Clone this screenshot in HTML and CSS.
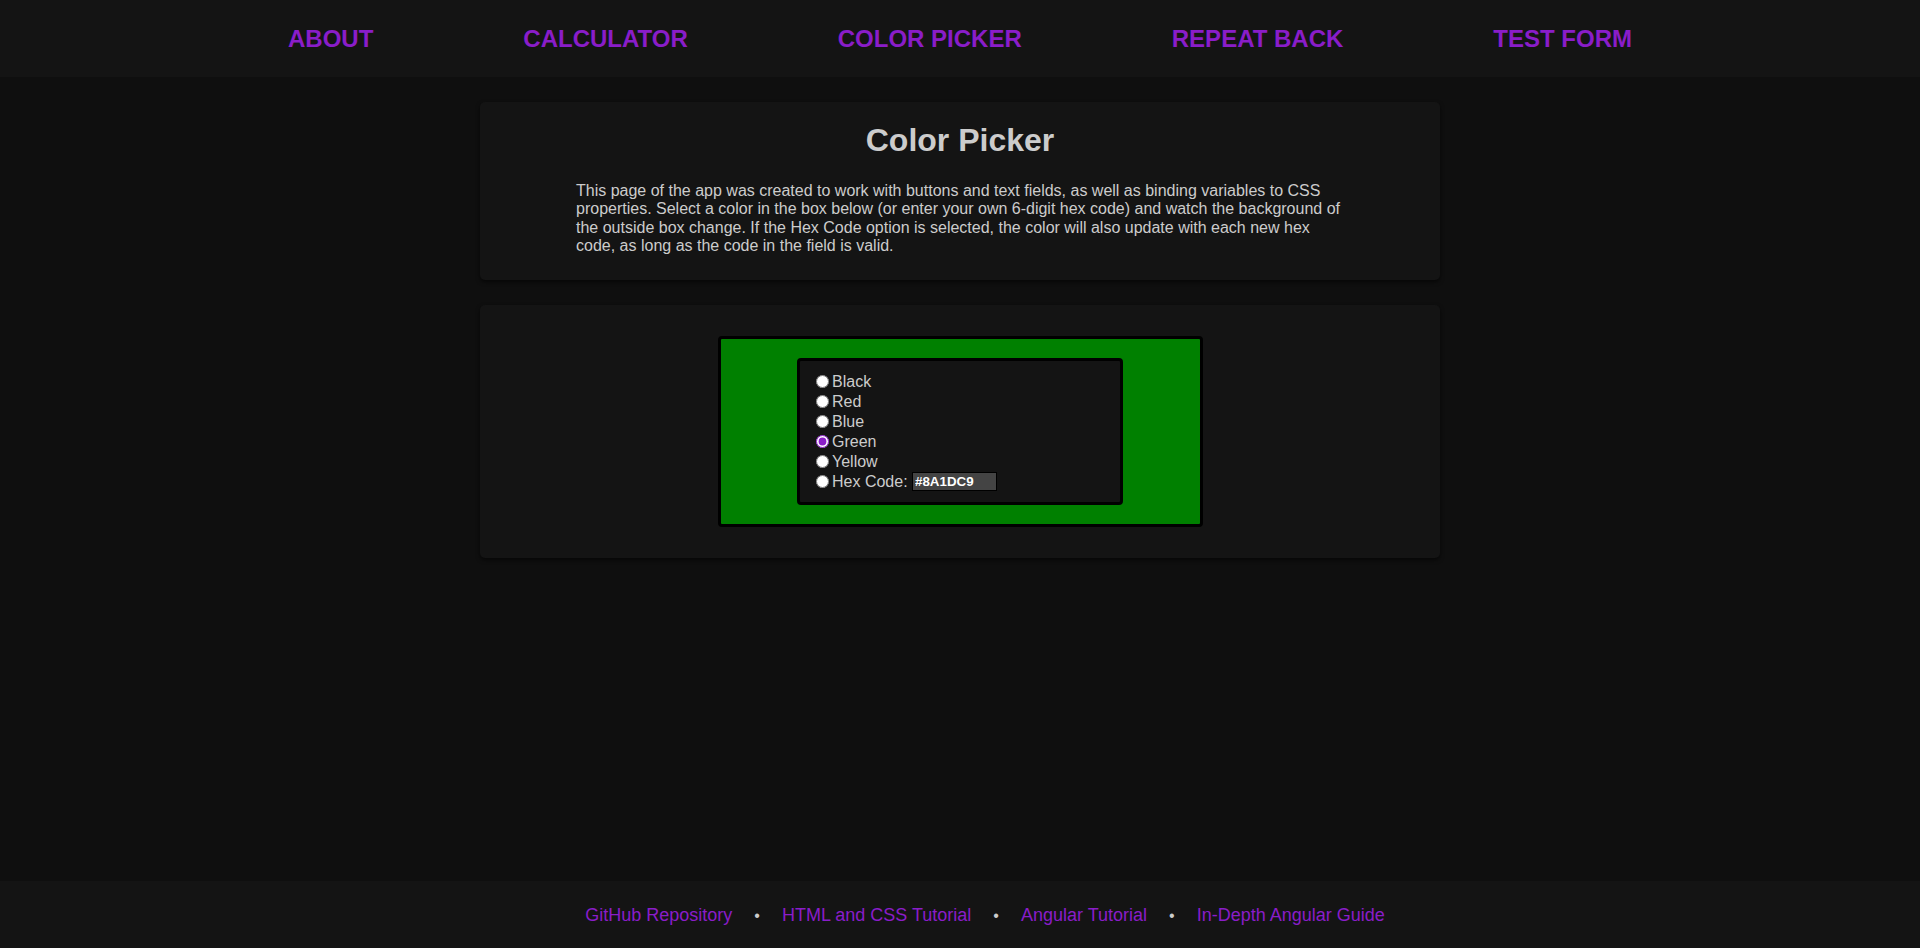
FILE: index.html
```html
<!DOCTYPE html>
<html lang="en">
<head>
<meta charset="utf-8">
<title>Color Picker</title>
<link rel="stylesheet" href="styles.css">
</head>
<body>
<nav class="topnav">
  <a href="#">ABOUT</a>
  <a href="#">CALCULATOR</a>
  <a href="#">COLOR PICKER</a>
  <a href="#">REPEAT BACK</a>
  <a href="#">TEST FORM</a>
</nav>
<main class="content">
  <section class="card intro">
    <h1>Color Picker</h1>
    <p>This page of the app was created to work with buttons and text fields, as well as binding variables to CSS properties. Select a color in the box below (or enter your own 6-digit hex code) and watch the background of the outside box change. If the Hex Code option is selected, the color will also update with each new hex code, as long as the code in the field is valid.</p>
  </section>
  <section class="card picker">
    <div class="swatch">
      <div class="options">
        <label class="opt"><input type="radio" name="c">Black</label>
        <label class="opt"><input type="radio" name="c">Red</label>
        <label class="opt"><input type="radio" name="c">Blue</label>
        <label class="opt"><input type="radio" name="c" checked>Green</label>
        <label class="opt"><input type="radio" name="c">Yellow</label>
        <label class="opt"><input type="radio" name="c">Hex Code:&nbsp;<input class="hex" type="text" value="#8A1DC9"></label>
      </div>
    </div>
  </section>
</main>
<footer class="foot">
  <a href="#">GitHub Repository</a><span class="sep">•</span>
  <a href="#">HTML and CSS Tutorial</a><span class="sep">•</span>
  <a href="#">Angular Tutorial</a><span class="sep">•</span>
  <a href="#">In-Depth Angular Guide</a>
</footer>
</body>
</html>
```
FILE: styles.css
```css
html, body {
  margin: 0;
  height: 100%;
}
body {
  background: #0f0f0f;
  color: #cccccc;
  font-family: "Liberation Sans", Arial, sans-serif;
  display: flex;
  flex-direction: column;
}
.topnav {
  height: 77px;
  flex: 0 0 77px;
  background: #141414;
  display: flex;
  justify-content: center;
  align-items: center;
  gap: 150px;
}
.topnav a {
  color: #8a1dc9;
  font-weight: bold;
  font-size: 24px;
  text-decoration: none;
}
.content {
  flex: 1;
  padding-top: 25px;
}
.card {
  width: 960px;
  margin: 0 auto 25px;
  background: #141414;
  border-radius: 5px;
  box-shadow: 0 2px 4px rgba(0, 0, 0, 0.6);
  box-sizing: border-box;
}
.intro {
  padding: 20px 0 24px;
}
.intro h1 {
  margin: 0 0 23px;
  text-align: center;
  font-size: 32px;
  color: #cccccc;
}
.intro p {
  width: 768px;
  margin: 0 auto;
  font-size: 16px;
  line-height: 18.4px;
}
.picker {
  padding: 31px 0;
  display: flex;
  justify-content: center;
}
.swatch {
  width: 485px;
  box-sizing: border-box;
  background: #008000;
  border: 3px solid #000;
  border-radius: 4px;
  padding: 19px 0;
  display: flex;
  justify-content: center;
}
.options {
  width: 326px;
  box-sizing: border-box;
  background: #141414;
  border: 3px solid #000;
  border-radius: 4px;
  padding: 11px 0 10px 16px;
  display: flex;
  flex-direction: column;
}
.opt {
  height: 20px;
  display: flex;
  align-items: center;
  font-size: 16px;
  color: #cccccc;
}
.opt input[type="radio"] {
  width: 13px;
  height: 13px;
  margin: 0 3px 0 0;
  accent-color: #8a1dc9;
}
.hex {
  width: 85px;
  height: 19px;
  box-sizing: border-box;
  background: #444444;
  border: 1px solid #000;
  color: #ffffff;
  font-family: "Liberation Sans", Arial, sans-serif;
  font-size: 13.33px;
  font-weight: bold;
  padding: 0 2px;
  margin: 0;
}
.foot {
  flex: 0 0 67px;
  height: 67px;
  box-sizing: border-box;
  background: #141414;
  display: flex;
  justify-content: center;
  align-items: center;
  padding: 2px 0 0 50px;
  font-size: 18px;
}
.foot a {
  color: #8a1dc9;
  text-decoration: none;
}
.sep {
  margin: 0 22px;
  color: #cccccc;
  font-size: 16px;
}
```
